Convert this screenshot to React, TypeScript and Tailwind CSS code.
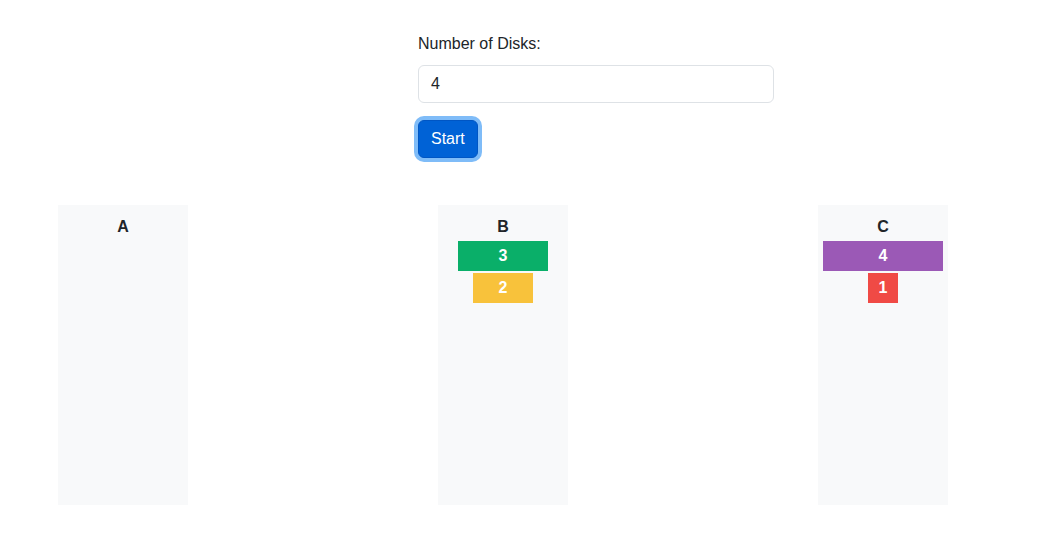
import React from "react";

const disks: Record<string, { n: number; color: string }[]> = {
  A: [],
  B: [
    { n: 3, color: "bg-[#0aaf69]" },
    { n: 2, color: "bg-[#f8c23b]" },
  ],
  C: [
    { n: 4, color: "bg-[#9b59b6]" },
    { n: 1, color: "bg-[#f04a45]" },
  ],
};

const widths: Record<number, string> = {
  1: "w-[30px]",
  2: "w-[60px]",
  3: "w-[90px]",
  4: "w-[120px]",
};

export default function App() {
  return (
    <div
      className="min-h-[550px] w-full bg-white text-[#212529]"
      style={{ fontFamily: '"Liberation Sans", Arial, sans-serif' }}
    >
      <div className="pl-[418px] pt-8">
        <div className="mb-[9px] text-base leading-6">Number of Disks:</div>
        <div className="flex h-[38px] w-[356px] items-center rounded-[6px] border border-[#dee2e6] bg-white px-3 text-base">
          4
        </div>
        <div className="mt-[17px] flex">
          <button className="h-[38px] rounded-[6px] border border-[#0056c4] bg-[#0062d6] px-3 text-base leading-6 text-white ring-4 ring-[#7fbcf8]">
            Start
          </button>
        </div>
      </div>
      <div className="mt-[47px] flex gap-[250px] pl-[58px]">
        {["A", "B", "C"].map((p) => (
          <div
            key={p}
            className="flex h-[300px] w-[130px] flex-col items-center gap-[2px] bg-[#f8f9fa] pt-[10px]"
          >
            <div className="text-base font-bold leading-6">{p}</div>
            {disks[p].map((d) => (
              <div
                key={d.n}
                className={`flex h-[30px] items-center justify-center text-base font-bold text-white ${widths[d.n]} ${d.color}`}
              >
                {d.n}
              </div>
            ))}
          </div>
        ))}
      </div>
    </div>
  );
}
